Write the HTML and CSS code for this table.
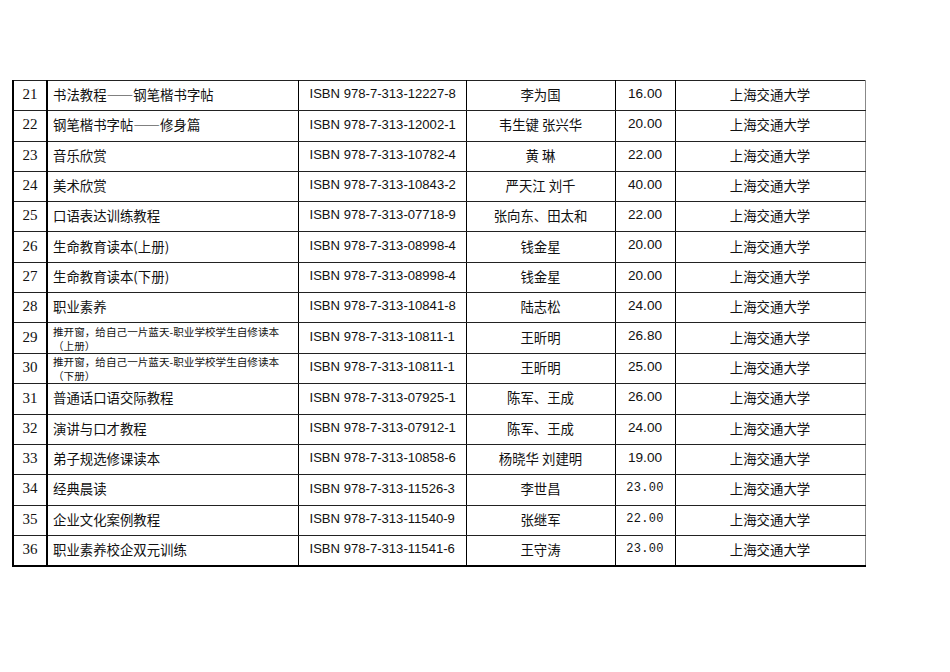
FILE: index.html
```html
<!DOCTYPE html>
<html lang="zh-CN">
<head>
<meta charset="utf-8">
<title>教材目录</title>
<link rel="stylesheet" href="styles.css">
</head>
<body>
<table class="books">
  <colgroup>
    <col class="c-no"><col class="c-title"><col class="c-isbn"><col class="c-author"><col class="c-price"><col class="c-pub">
  </colgroup>
  <tbody>
    <tr><td class="no">21</td><td class="title">书法教程——钢笔楷书字帖</td><td class="isbn">ISBN 978-7-313-12227-8</td><td class="author">李为国</td><td class="price">16.00</td><td class="pub">上海交通大学</td></tr>
    <tr><td class="no">22</td><td class="title">钢笔楷书字帖——修身篇</td><td class="isbn">ISBN 978-7-313-12002-1</td><td class="author">韦生键 张兴华</td><td class="price">20.00</td><td class="pub">上海交通大学</td></tr>
    <tr><td class="no">23</td><td class="title">音乐欣赏</td><td class="isbn">ISBN 978-7-313-10782-4</td><td class="author">黄 琳</td><td class="price">22.00</td><td class="pub">上海交通大学</td></tr>
    <tr><td class="no">24</td><td class="title">美术欣赏</td><td class="isbn">ISBN 978-7-313-10843-2</td><td class="author">严天江 刘千</td><td class="price">40.00</td><td class="pub">上海交通大学</td></tr>
    <tr><td class="no">25</td><td class="title">口语表达训练教程</td><td class="isbn">ISBN 978-7-313-07718-9</td><td class="author">张向东、田太和</td><td class="price">22.00</td><td class="pub">上海交通大学</td></tr>
    <tr><td class="no">26</td><td class="title">生命教育读本(上册)</td><td class="isbn">ISBN 978-7-313-08998-4</td><td class="author">钱金星</td><td class="price">20.00</td><td class="pub">上海交通大学</td></tr>
    <tr><td class="no">27</td><td class="title">生命教育读本(下册)</td><td class="isbn">ISBN 978-7-313-08998-4</td><td class="author">钱金星</td><td class="price">20.00</td><td class="pub">上海交通大学</td></tr>
    <tr><td class="no">28</td><td class="title">职业素养</td><td class="isbn">ISBN 978-7-313-10841-8</td><td class="author">陆志松</td><td class="price">24.00</td><td class="pub">上海交通大学</td></tr>
    <tr><td class="no">29</td><td class="title small">推开窗，给自己一片蓝天-职业学校学生自修读本<br>（上册）</td><td class="isbn">ISBN 978-7-313-10811-1</td><td class="author">王昕明</td><td class="price">26.80</td><td class="pub">上海交通大学</td></tr>
    <tr><td class="no">30</td><td class="title small">推开窗，给自己一片蓝天-职业学校学生自修读本<br>（下册）</td><td class="isbn">ISBN 978-7-313-10811-1</td><td class="author">王昕明</td><td class="price">25.00</td><td class="pub">上海交通大学</td></tr>
    <tr><td class="no">31</td><td class="title">普通话口语交际教程</td><td class="isbn">ISBN 978-7-313-07925-1</td><td class="author">陈军、王成</td><td class="price">26.00</td><td class="pub">上海交通大学</td></tr>
    <tr><td class="no">32</td><td class="title">演讲与口才教程</td><td class="isbn">ISBN 978-7-313-07912-1</td><td class="author">陈军、王成</td><td class="price">24.00</td><td class="pub">上海交通大学</td></tr>
    <tr><td class="no">33</td><td class="title">弟子规选修课读本</td><td class="isbn">ISBN 978-7-313-10858-6</td><td class="author">杨晓华 刘建明</td><td class="price">19.00</td><td class="pub">上海交通大学</td></tr>
    <tr><td class="no">34</td><td class="title">经典晨读</td><td class="isbn">ISBN 978-7-313-11526-3</td><td class="author">李世昌</td><td class="price mono">23.00</td><td class="pub">上海交通大学</td></tr>
    <tr><td class="no">35</td><td class="title">企业文化案例教程</td><td class="isbn">ISBN 978-7-313-11540-9</td><td class="author">张继军</td><td class="price mono">22.00</td><td class="pub">上海交通大学</td></tr>
    <tr class="last"><td class="no">36</td><td class="title">职业素养校企双元训练</td><td class="isbn">ISBN 978-7-313-11541-6</td><td class="author">王守涛</td><td class="price mono">23.00</td><td class="pub">上海交通大学</td></tr>
  </tbody>
</table>
</body>
</html>
```

FILE: styles.css
```css
html, body {
  margin: 0;
  padding: 0;
  background: #fff;
}

body {
  padding: 80px 0 0 12px;
  font-family: "Noto Sans CJK SC", "Noto Sans", sans-serif;
  color: #111;
}

.books {
  border-collapse: collapse;
  table-layout: fixed;
  width: 853px;
  border-top: 1px solid #777;
  border-right: 1px solid #888;
  border-left: 2px solid #000;
  border-bottom: 2px solid #000;
}

.c-no { width: 34px; }
.c-title { width: 251px; }
.c-isbn { width: 168px; }
.c-author { width: 149px; }
.c-price { width: 60px; }
.c-pub { width: 190px; }

.books td {
  height: 26.3px;
  padding: 0 0 3px 0;
  border-top: 1px solid #222;
  border-bottom: 1px solid #222;
  border-left: 1px solid #000;
  border-right: 1px solid #000;
  vertical-align: middle;
  font-size: 13.4px;
  line-height: 1.2;
  white-space: nowrap;
  overflow: hidden;
}

.books td.no {
  text-align: center;
  font-family: "Liberation Serif", serif;
  font-size: 15px;
  border-right: 2px solid #000;
}

.books td.title {
  padding-left: 5px;
  font-size: 13.4px;
}

.books td.title.small {
  font-size: 10.6px;
  line-height: 14px;
  vertical-align: top;
  padding-top: 1.5px;
  padding-bottom: 0;
  height: 27.8px;
}

.books td.isbn {
  padding-left: 11px;
  font-family: "Liberation Sans", sans-serif;
  font-size: 13.1px;
}

.books td.author {
  text-align: center;
}

.books td.price {
  text-align: center;
  font-family: "Liberation Sans", sans-serif;
  font-size: 13.6px;
}

.books td.price.mono {
  font-family: "Liberation Mono", monospace;
  font-size: 12px;
  letter-spacing: 0.3px;
}

.books td.pub {
  text-align: center;
  border-right: 1px solid #888;
}
```
